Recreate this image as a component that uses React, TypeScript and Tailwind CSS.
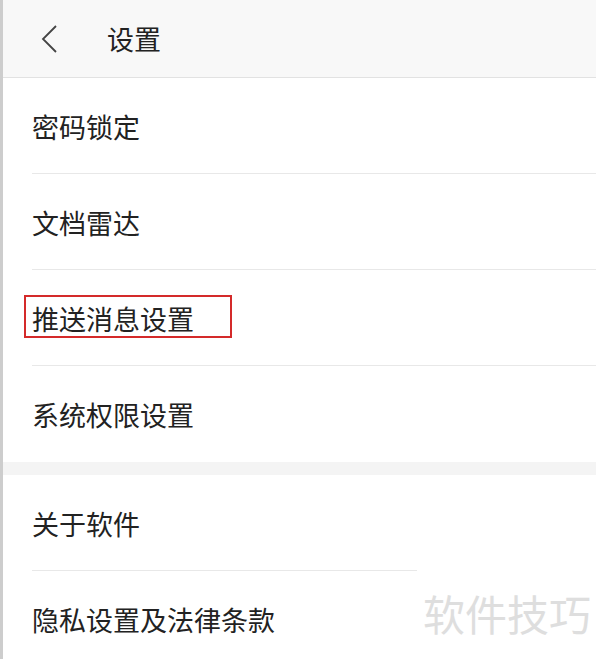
import React from "react";

const font = { fontFamily: '"Noto Sans CJK SC", "Noto Sans", sans-serif' };

function Row({ label, divider = true, shortDivider = false, boxed = false }: { label: string; divider?: boolean; shortDivider?: boolean; boxed?: boolean }) {
  return (
    <div className="relative h-[96px] bg-white">
      <div className="flex h-full items-center pl-[29px]">
        <span className="relative text-[27px] leading-none text-[#222]">
          {label}
          {boxed && (
            <span className="absolute -left-[8px] -top-[10px] h-[43px] w-[208px] border-2 border-[#d42a2a]" />
          )}
        </span>
      </div>
      {divider && (
        <div className={`absolute bottom-0 left-[29px] h-px bg-[#e8e8e8] ${shortDivider ? "w-[385px]" : "right-0"}`} />
      )}
    </div>
  );
}

export default function App() {
  return (
    <div className="relative h-[659px] w-[596px] overflow-hidden border-l-[3px] border-[#cdcdcd] bg-white" style={font}>
      {/* header */}
      <div className="flex h-[78px] items-center border-b border-[#e2e2e2] bg-[#f8f8f8]">
        <svg width="20" height="30" viewBox="0 0 20 30" className="ml-[36px]">
          <path d="M17 2 L4 15 L17 28" fill="none" stroke="#444" strokeWidth="1.8" />
        </svg>
        <span className="ml-[48px] text-[27px] leading-none text-[#222]">设置</span>
      </div>

      <Row label="密码锁定" />
      <Row label="文档雷达" />
      <Row label="推送消息设置" boxed />
      <Row label="系统权限设置" divider={false} />

      <div className="h-[13px] bg-[#f4f4f4]" />

      <Row label="关于软件" shortDivider />
      <Row label="隐私设置及法律条款" divider={false} />

      <span className="absolute left-[420px] top-[592px] text-[42px] leading-none text-[#dedede]">软件技巧</span>
    </div>
  );
}
